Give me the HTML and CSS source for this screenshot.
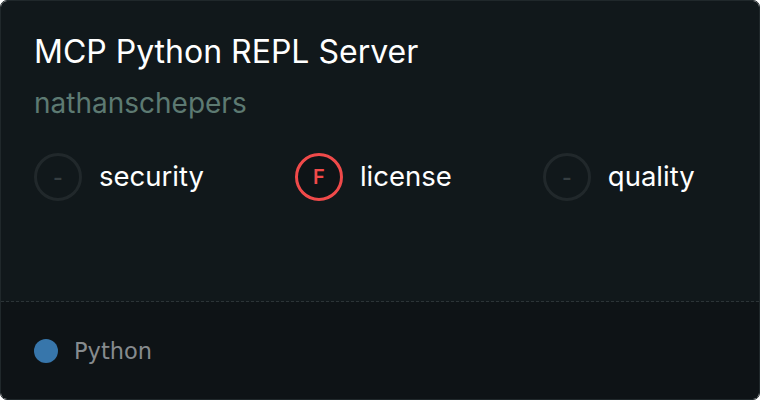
FILE: index.html
```html
<!DOCTYPE html>
<html>
<head>
<meta charset="utf-8">
<link rel="stylesheet" href="styles.css">
</head>
<body>
<div class="card">
  <div class="top">
    <div class="title">MCP Python REPL Server</div>
    <div class="author">nathanschepers</div>
    <div class="scores">
      <div class="score">
        <div class="ring">-</div>
        <span class="label">security</span>
      </div>
      <div class="score">
        <div class="ring ring-f">F</div>
        <span class="label">license</span>
      </div>
      <div class="score">
        <div class="ring">-</div>
        <span class="label">quality</span>
      </div>
    </div>
  </div>
  <div class="bottom">
    <span class="dot"></span>
    <span class="lang">Python</span>
  </div>
</div>
</body>
</html>
```

FILE: styles.css
```css
html, body {
  margin: 0;
  padding: 0;
  background: #ffffff;
}
.card {
  width: 760px;
  height: 400px;
  box-sizing: border-box;
  border: 1px solid #20282b;
  border-radius: 7px;
  overflow: hidden;
  display: flex;
  flex-direction: column;
  font-family: Inter, "Noto Sans", sans-serif;
}
.top {
  background: #11181b;
  height: 301px;
  box-sizing: border-box;
  padding: 31px 33px 0 33px;
  border-bottom: 1px dashed #2c3437;
}
.title {
  color: #ffffff;
  font-size: 32px;
  line-height: 40px;
}
.author {
  color: #5d7a72;
  font-size: 28px;
  line-height: 34px;
  margin-top: 14px;
}
.scores {
  display: flex;
  gap: 91px;
  margin-top: 33px;
}
.score {
  display: flex;
  align-items: center;
  gap: 17px;
  flex-shrink: 0;
}
.ring {
  width: 48px;
  height: 48px;
  box-sizing: border-box;
  border: 3px solid #21282b;
  border-radius: 50%;
  display: flex;
  align-items: center;
  justify-content: center;
  color: #363e41;
  font-size: 21px;
  font-weight: 600;
}
.ring-f {
  border-color: #f04a4a;
  background: #0e1417;
  color: #f04a4a;
  font-size: 20px;
}
.label {
  color: #ffffff;
  font-size: 27.5px;
  line-height: 30px;
  padding-bottom: 2px;
}
.bottom {
  flex: 1;
  background: #0e1316;
  display: flex;
  align-items: center;
  padding-left: 33px;
  gap: 16px;
}
.dot {
  width: 24px;
  height: 24px;
  border-radius: 50%;
  background: #3776ab;
}
.lang {
  color: #868b8e;
  font-size: 22.5px;
  font-family: "DejaVu Sans", sans-serif;
}
```
